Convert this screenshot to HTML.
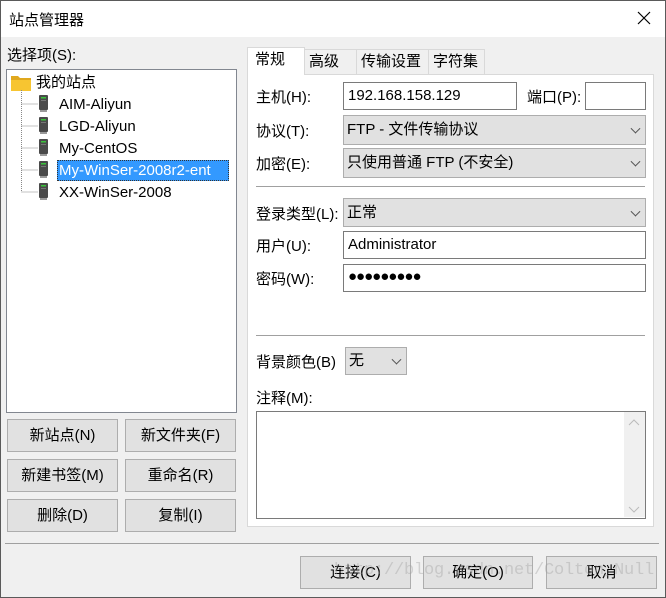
<!DOCTYPE html>
<html><head><meta charset="utf-8"><style>
*{margin:0;padding:0;box-sizing:border-box}
body{width:666px;height:598px;overflow:hidden;font-family:"Liberation Sans","Noto Sans CJK SC",sans-serif;font-size:15px;color:#000;background:#f0f0f0;position:relative}
.a{position:absolute}
.win{left:0;top:0;width:666px;height:598px;border:1px solid #5a5a5a}
.title{left:1px;top:1px;width:664px;height:36px;background:#fff}
.btn{position:absolute;background:#e1e1e1;border:1px solid #adadad;text-align:center;font-size:15px}
.inp{position:absolute;background:#fff;border:1px solid #7a7a7a;padding-left:4px;font-size:15px}
.sel{position:absolute;background:#e1e1e1;border:1px solid #adadad;padding-left:3px;font-size:15px}
.sel::after{content:"";position:absolute;right:6px;top:50%;width:6px;height:6px;border-right:1px solid #555;border-bottom:1px solid #555;transform:translateY(-70%) rotate(45deg)}
.lbl{position:absolute;font-size:15px}
.tab{position:absolute;top:49px;height:25px;background:#f0f0f0;border:1px solid #d9d9d9;border-bottom:none;font-size:15px;padding-left:4px;line-height:24px}
.item{position:absolute;left:59px;font-size:15px;line-height:20px}
</style></head><body>
<div class="a win"></div>
<div class="a title"></div>
<div class="a" style="left:9px;top:9px;font-size:15px">站点管理器</div>
<svg class="a" style="left:637px;top:11px" width="14" height="14"><path d="M1 1L13 13M13 1L1 13" stroke="#000" stroke-width="1.2"/></svg>

<div class="lbl" style="left:7px;top:44px;font-size:15px">选择项(S):</div>
<div class="a" style="left:6px;top:69px;width:231px;height:344px;background:#fff;border:1px solid #828790"></div>
<svg class="a" style="left:11px;top:75px" width="22" height="16"><path d="M0 1h7l2 2h11v2H0z" fill="#e0a81e"/><path d="M0 5h20v11H0z" fill="#f7c531"/></svg>
<div class="item" style="left:36px;top:73px">我的站点</div>
<svg class="a" style="left:20px;top:90px" width="20" height="104"><path d="M1.5 0V102M1.5 14H18M1.5 36H18M1.5 58H18M1.5 80H18M1.5 102H18" stroke="#888" stroke-dasharray="1 1"/></svg>
<svg class="a" style="left:38px;top:95px" width="12" height="112">
<g id="s"><rect x="1" y="0" width="9" height="15" rx="1" fill="#4a4a4a"/><rect x="3" y="2" width="5" height="1.5" fill="#3ac43a"/><rect x="3" y="5" width="5" height="1" fill="#777"/><rect x="2" y="15" width="7" height="2" fill="#999"/></g>
<use href="#s" y="22"/><use href="#s" y="44"/><use href="#s" y="66"/><use href="#s" y="88"/></svg>
<div class="item" style="top:95px">AIM-Aliyun</div>
<div class="item" style="top:117px">LGD-Aliyun</div>
<div class="item" style="top:139px">My-CentOS</div>
<div class="a" style="left:57px;top:160px;width:172px;height:21px;background:#3399ff;border:1px dotted #333"></div>
<div class="item" style="top:161px;color:#fff">My-WinSer-2008r2-ent</div>
<div class="item" style="top:183px">XX-WinSer-2008</div>

<div class="btn" style="left:7px;top:419px;width:111px;height:33px;line-height:31px">新站点(N)</div>
<div class="btn" style="left:125px;top:419px;width:111px;height:33px;line-height:31px">新文件夹(F)</div>
<div class="btn" style="left:7px;top:459px;width:111px;height:33px;line-height:31px">新建书签(M)</div>
<div class="btn" style="left:125px;top:459px;width:111px;height:33px;line-height:31px">重命名(R)</div>
<div class="btn" style="left:7px;top:499px;width:111px;height:33px;line-height:31px">删除(D)</div>
<div class="btn" style="left:125px;top:499px;width:111px;height:33px;line-height:31px">复制(I)</div>

<div class="a" style="left:247px;top:74px;width:407px;height:453px;background:#fff;border:1px solid #d9d9d9"></div>
<div class="tab" style="left:247px;top:47px;height:28px;width:58px;background:#fff;border-color:#d9d9d9;padding-left:7px">常规</div>
<div class="tab" style="left:304px;width:53px">高级</div>
<div class="tab" style="left:356px;width:73px">传输设置</div>
<div class="tab" style="left:428px;width:57px">字符集</div>

<div class="lbl" style="left:256px;top:86px">主机(H):</div>
<div class="inp" style="left:343px;top:82px;width:174px;height:28px;line-height:26px">192.168.158.129</div>
<div class="lbl" style="left:527px;top:86px">端口(P):</div>
<div class="inp" style="left:585px;top:82px;width:61px;height:28px"></div>
<div class="lbl" style="left:256px;top:120px">协议(T):</div>
<div class="sel" style="left:343px;top:115px;width:303px;height:30px;line-height:28px">FTP - 文件传输协议</div>
<div class="lbl" style="left:256px;top:153px">加密(E):</div>
<div class="sel" style="left:343px;top:148px;width:303px;height:30px;line-height:28px">只使用普通 FTP (不安全)</div>
<div class="a" style="left:256px;top:186px;width:389px;height:1px;background:#a0a0a0"></div>
<div class="lbl" style="left:256px;top:203px">登录类型(L):</div>
<div class="sel" style="left:343px;top:198px;width:303px;height:29px;line-height:27px">正常</div>
<div class="lbl" style="left:256px;top:235px">用户(U):</div>
<div class="inp" style="left:343px;top:231px;width:303px;height:28px;line-height:26px">Administrator</div>
<div class="lbl" style="left:256px;top:268px">密码(W):</div>
<div class="inp" style="left:343px;top:264px;width:303px;height:28px;line-height:24px;font-size:15px;letter-spacing:-1px">●●●●●●●●●</div>
<div class="a" style="left:256px;top:335px;width:389px;height:1px;background:#a0a0a0"></div>
<div class="lbl" style="left:256px;top:351px">背景颜色(B)</div>
<div class="sel" style="left:345px;top:347px;width:62px;height:28px;line-height:26px">无</div>
<div class="lbl" style="left:256px;top:387px">注释(M):</div>
<div class="a" style="left:256px;top:411px;width:390px;height:108px;background:#fff;border:1px solid #7a7a7a"></div>
<div class="a" style="left:624px;top:412px;width:21px;height:105px;background:#f0f0f0"></div>
<svg class="a" style="left:628px;top:418px" width="12" height="96"><path d="M1 7L6 2L11 7M1 89L6 94L11 89" stroke="#bbb" fill="none"/></svg>

<div class="a" style="left:5px;top:543px;width:654px;height:1px;background:#a0a0a0"></div>
<div class="btn" style="left:300px;top:556px;width:111px;height:33px;line-height:31px">连接(C)</div>
<div class="btn" style="left:423px;top:556px;width:110px;height:33px;line-height:31px">确定(O)</div>
<div class="btn" style="left:546px;top:556px;width:111px;height:33px;line-height:31px">取消</div>
<div class="a" style="left:334px;top:561px;font-family:'Liberation Mono',monospace;font-size:17px;letter-spacing:-0.2px;color:rgba(160,160,160,0.4);white-space:nowrap">http://blog.csdn.net/Colton_Null</div>
</body></html>
